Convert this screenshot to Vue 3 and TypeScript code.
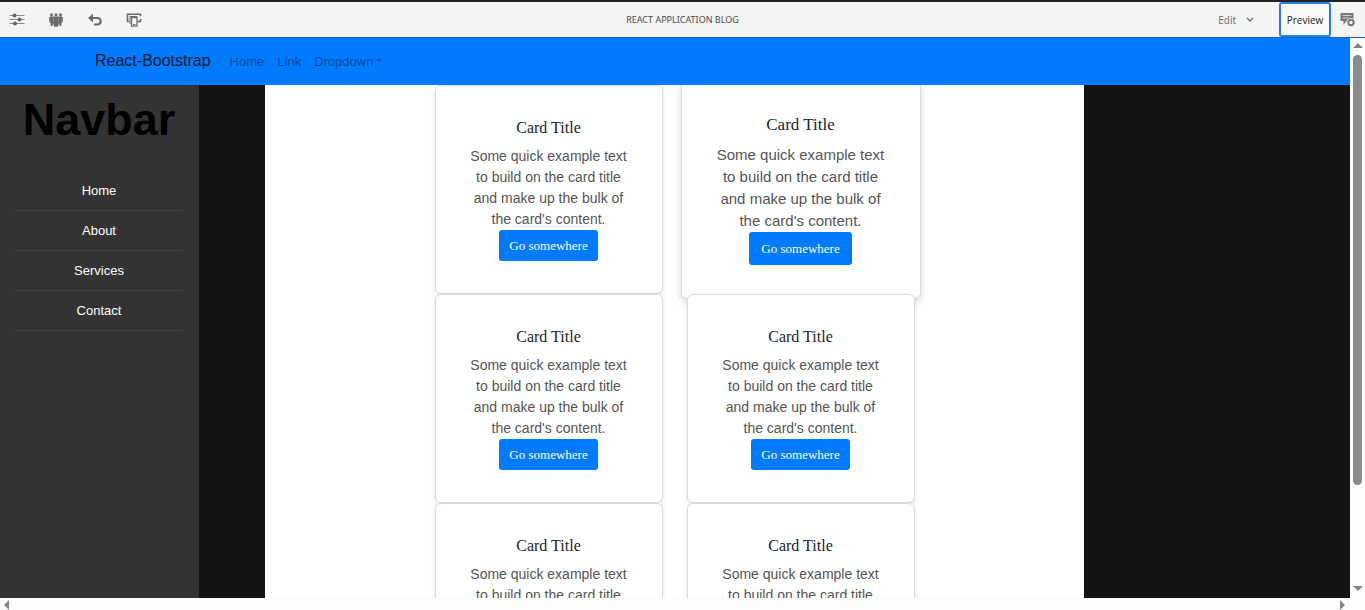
<script setup lang="ts">
interface Card {
  id: number
  active: boolean
}

const cards: Card[] = [1, 2, 3, 4, 5, 6].map((id) => ({ id, active: id === 2 }))
const sideLinks: string[] = ['Home', 'About', 'Services', 'Contact']
</script>

<template>
  <div class="editor">
    <header class="toolbar">
      <div class="tools">
        <button class="tool" type="button" aria-label="Properties">
          <svg width="16" height="14" viewBox="0 0 16 14">
            <path d="M0.500 2.500h15M0.500 6.500h15M0.500 10.500h15" stroke="#8a8a8a" stroke-width="1.200" />
            <circle cx="5.500" cy="2.500" r="2" fill="#666" />
            <circle cx="10.500" cy="6.500" r="2" fill="#666" />
            <circle cx="6" cy="10.500" r="2" fill="#666" />
          </svg>
        </button>
        <button class="tool" type="button" aria-label="Audience">
          <svg width="16" height="14" viewBox="0 0 16 14" fill="#6b6b6b">
            <circle cx="3.500" cy="1.700" r="1.500" />
            <circle cx="8" cy="1.700" r="1.500" />
            <circle cx="12.500" cy="1.700" r="1.500" />
            <path d="M2.500 3.500h11q1.300 0 1.300 1.300V9h-1l-.5 4h-1.600l-.8-3-.9 3.800H6.200L5.300 10l-.8 3H2.800L2.200 9h-1V4.800q0-1.300 1.300-1.300z" />
            <path d="M5.500 5v4M10.500 5v4" stroke="#a5a5a5" stroke-width=".6" />
          </svg>
        </button>
        <button class="tool" type="button" aria-label="Undo">
          <svg width="16" height="14" viewBox="0 0 16 14">
            <path d="M4 5h6.500a3 3 0 0 1 0 6.500H7" fill="none" stroke="#6b6b6b" stroke-width="2.200" />
            <path d="M6 0.500v9L1 5z" fill="#6b6b6b" />
          </svg>
        </button>
        <button class="tool" type="button" aria-label="Emulator">
          <svg width="16" height="14" viewBox="0 0 16 14" fill="none" stroke="#6b6b6b">
            <path d="M3 8.500H1.500V1.200h13v2" stroke-width="1.600" />
            <path d="M4 11V3.500H11" />
            <rect x="5.500" y="4.500" width="5.500" height="8.500" stroke-width="1.300" />
            <path d="M7 11.500h2.500" />
            <path d="M11.500 8.500h3V6" stroke-width="1.600" />
          </svg>
        </button>
      </div>
      <h1 class="page-title">REACT APPLICATION BLOG</h1>
      <div class="modes">
        <button class="edit" type="button">
          Edit
          <svg width="8" height="6" viewBox="0 0 8 6">
            <path d="M1 1l3 3 3-3" fill="none" stroke="#6b6b6b" stroke-width="1.300" />
          </svg>
        </button>
        <button class="preview" type="button">Preview</button>
        <button class="tool annotate" type="button" aria-label="Annotate">
          <svg width="16" height="14" viewBox="0 0 16 14">
            <path d="M0.500 0H13.500v8H6.500L3.500 12V8H.5z" fill="#777" />
            <path d="M2.500 2.500h9M2.500 5h6" stroke="#d0d0d0" />
            <circle cx="11" cy="9.500" r="4.500" fill="#f4f4f4" />
            <circle cx="11" cy="9.500" r="2.700" fill="none" stroke="#777" stroke-width="2" />
          </svg>
        </button>
      </div>
    </header>

    <div class="frame">
      <div class="site">
        <nav class="navbar" aria-label="Main">
          <a class="brand" href="#">React-Bootstrap</a>
          <a class="nav-link" href="#home">Home</a>
          <a class="nav-link" href="#link">Link</a>
          <a class="nav-link dropdown" href="#dropdown">Dropdown</a>
        </nav>
        <div class="content">
          <aside class="sidebar">
            <h2>Navbar</h2>
            <ul>
              <li v-for="link in sideLinks" :key="link">
                <a :href="'#' + link.toLowerCase()">{{ link }}</a>
              </li>
            </ul>
          </aside>
          <main class="main">
            <div class="cards">
              <article v-for="card in cards" :key="card.id" class="card" :class="{ active: card.active }">
                <h3>Card Title</h3>
                <p>Some quick example text to build on the card title and make up the bulk of the card's content.</p>
                <button type="button">Go somewhere</button>
              </article>
            </div>
          </main>
        </div>
      </div>
      <div class="scroll-y" aria-hidden="true">
        <i class="arrow up"></i>
        <div class="track"><div class="thumb"></div></div>
        <i class="arrow down"></i>
      </div>
    </div>
    <div class="scroll-x" aria-hidden="true">
      <i class="arrow left"></i>
      <i class="arrow right"></i>
    </div>
  </div>
</template>

<style>
body {
  margin: 0;
  overflow: hidden;
}
</style>

<style scoped>
* {
  box-sizing: border-box;
}
button {
  border: 0;
  padding: 0;
  background: none;
}
a {
  text-decoration: none;
}
.editor {
  display: flex;
  flex-direction: column;
  height: 100vh;
  background: #fcfcfc;
  font-family: "Liberation Sans", Arial, sans-serif;
}
.toolbar {
  display: grid;
  grid-template-columns: 1fr auto 1fr;
  align-items: center;
  flex: none;
  height: 38px;
  border-top: 2px solid #222;
  border-bottom: 1px solid #1766bd;
  background: #f4f4f4;
  font-family: "Noto Sans", "Open Sans", sans-serif;
}
.tools {
  display: flex;
  gap: 23px;
  padding-left: 9px;
}
.tool {
  display: flex;
  width: 16px;
}
.page-title {
  margin: 0;
  color: #4b4b4b;
  font-size: 9px;
  font-weight: 400;
}
.modes {
  display: flex;
  align-items: center;
  justify-content: flex-end;
  align-self: stretch;
}
.edit {
  display: flex;
  align-items: center;
  gap: 10px;
  margin-right: 25px;
  color: #6b6b6b;
  font-family: "Open Sans", sans-serif;
  font-size: 10px;
}
.preview {
  width: 52px;
  height: 35px;
  border: 2px solid #2680eb;
  border-radius: 3px;
  background: #fafafa;
  color: #222;
  font-family: "Open Sans", sans-serif;
  font-size: 10px;
}
.annotate {
  margin: 0 9px;
}
.frame {
  display: flex;
  flex: 1;
  min-height: 0;
}
.site {
  display: flex;
  flex: 1;
  flex-direction: column;
  min-width: 0;
  overflow: hidden;
  background: #131313;
}
.navbar {
  z-index: 1;
  display: flex;
  flex: none;
  align-items: center;
  gap: 13px;
  height: 47px;
  padding: 0 0 2px 95px;
  background: #007bff;
}
.brand {
  margin-right: 6px;
  color: #0a1a2b;
  font-size: 16px;
  line-height: 24px;
}
.nav-link {
  padding-top: 2px;
  color: #004a99;
  font-size: 13px;
  line-height: 20px;
}
.dropdown::after {
  display: inline-block;
  margin-left: 3px;
  border-top: 3px solid;
  border-right: 3px solid transparent;
  border-left: 3px solid transparent;
  vertical-align: 4px;
  content: "";
}
.content {
  display: grid;
  grid-template-columns: 199px minmax(0, 1fr);
  flex: 1;
  min-height: 0;
}
.sidebar {
  padding: 8px 16px 0 15px;
  background: #333;
  text-align: center;
}
.sidebar h2 {
  margin: 0 0 24px;
  color: #000;
  font-size: 45px;
  line-height: 54px;
}
.sidebar ul {
  margin: 0;
  padding: 0;
  list-style: none;
}
.sidebar li {
  height: 40px;
  padding-top: 10px;
  border-bottom: 1px solid #444;
  font-size: 13px;
  line-height: 20px;
}
.sidebar a {
  color: #fff;
}
.main {
  display: flex;
  justify-content: center;
  margin: 0 266px 0 66px;
  background: #fff;
}
.cards {
  display: grid;
  grid-template-columns: 228px 228px;
  grid-auto-rows: 209px;
  align-content: start;
  column-gap: 24px;
}
.card {
  display: flex;
  flex-direction: column;
  align-items: center;
  padding: 32px 32px 0;
  border: 1px solid #dcdcdc;
  border-radius: 6px;
  background: #fff;
  box-shadow: 0 2px 5px rgba(0, 0, 0, 0.1);
  text-align: center;
}
.card h3 {
  margin: 0 0 8px;
  color: #212529;
  font-family: "Liberation Serif", "Times New Roman", serif;
  font-size: 16px;
  font-weight: 400;
  line-height: 20px;
}
.card p {
  margin: 0;
  color: #555;
  font-size: 14px;
  line-height: 21px;
}
.card button {
  width: 99px;
  height: 31px;
  border-radius: 3px;
  background: #007bff;
  color: #fff;
  font-family: "Liberation Serif", "Times New Roman", serif;
  font-size: 13px;
}
.card.active {
  margin: -5px -6px;
  padding-top: 33px;
  box-shadow: 0 3px 7px rgba(0, 0, 0, 0.15);
}
.active h3 {
  margin-bottom: 9px;
  font-size: 17px;
  line-height: 21px;
}
.active p {
  font-size: 15px;
  line-height: 22px;
}
.active button {
  width: 103px;
  height: 33px;
}
.scroll-y {
  display: flex;
  flex-direction: column;
  align-items: center;
  width: 15px;
  padding: 5px 0 7px;
  background: #fcfcfc;
}
.track {
  flex: 1;
  padding-top: 7px;
}
.thumb {
  width: 9px;
  height: 81%;
  border-radius: 5px;
  background: #8b8b8b;
}
.scroll-x {
  display: flex;
  flex: none;
  align-items: center;
  justify-content: space-between;
  height: 12px;
  padding: 2px 20px 0 4px;
}
.arrow {
  border: 5px solid transparent;
}
.up {
  border-top: 0;
  border-bottom-color: #858585;
}
.down {
  border-bottom: 0;
  border-top-color: #858585;
}
.left {
  border-left: 0;
  border-right-color: #858585;
}
.right {
  border-right: 0;
  border-left-color: #858585;
}
</style>
